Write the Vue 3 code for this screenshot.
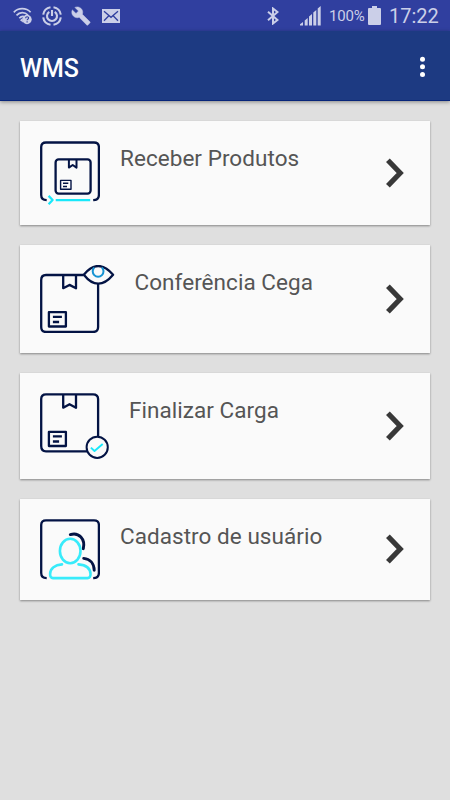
<script setup>
const items = [
  { icon: 'receive', label: 'Receber Produtos' },
  { icon: 'blind', label: 'Conferência Cega' },
  { icon: 'finish', label: 'Finalizar Carga' },
  { icon: 'users', label: 'Cadastro de usuário' },
]
</script>

<template>
  <div class="screen">
    <header class="status">
      <div class="notifications">
        <svg class="wifi" width="20" height="18" viewBox="0 0 20 18">
          <g fill="none" stroke="currentColor" stroke-width="1.7">
            <path d="M.8 5.3C5.3.5 13.200 .5 17.600 5.300M3.500 8.300C6.800 4.800 11.600 4.800 15 8M6.300 11.300C8 9.300 9.300 9 11 9.500" />
          </g>
          <path d="M7 13.200 9.500 11 10 15.600Z" fill="currentColor" />
          <circle cx="14" cy="12.500" r="4.700" fill="currentColor" />
          <path d="M12.600 11.300c0-2 3-1.900 3-.2 0 1.200-1.500 1.100-1.500 2.200M14.100 14.300v1.300" fill="none" stroke="#303f9f" stroke-width="1.100" />
        </svg>
        <svg class="power" width="20" height="20" viewBox="0 0 20 20" fill="none" stroke="currentColor" stroke-width="2.100">
          <path d="M8.500 1.200A8.900 8.900 0 0 0 1.200 8.600M1.200 11.400A8.900 8.900 0 0 0 8.500 18.800M11.500 18.800A8.900 8.900 0 0 0 18.800 11.400M18.800 8.600A8.900 8.900 0 0 0 11.500 1.200" />
          <path d="M7.300 5.800a5 5 0 1 0 5.400 0M10 4v6" />
        </svg>
        <svg class="wrench" width="20" height="20" viewBox="0 0 24 24" fill="currentColor" stroke="currentColor" stroke-width=".6">
          <path d="M22.700 19l-9.100-9.100c.9-2.300.4-5-1.500-6.900-2-2-5-2.400-7.400-1.300L9 6 6 9 1.600 4.700C.4 7.100.9 10.100 2.900 12.100c1.900 1.900 4.600 2.400 6.900 1.500l9.100 9.100c.4.400 1 .4 1.400 0l2.300-2.300c.5-.4.5-1.100.1-1.400z" />
        </svg>
        <svg class="mail" width="18" height="14" viewBox="0 0 18 14">
          <rect width="18" height="14" fill="currentColor" />
          <path d="M2 2.300 9 8.300 16 2.300M2 11.800 6.600 7M16 11.800 11.400 7" fill="none" stroke="#303f9f" stroke-width="1.300" />
        </svg>
      </div>
      <div class="system">
        <svg class="bluetooth" width="12" height="18" viewBox="0 0 12 18" fill="none" stroke="currentColor" stroke-width="2">
          <path d="M1 4.800 10.500 13 6 16.500V1.500L10.500 5 1 13.200" />
        </svg>
        <svg class="signal" width="21" height="20" viewBox="0 0 21 20" fill="currentColor">
          <path d="M0 19.500V18.300L3 16v3.500zM4.700 19.500V14.500L7.700 12v7.500zM9 19.500V10.500L12 8v11.500zM13.300 19.500V6.500L16.300 4v15.500zM17.700 19.500V2.500L20.700 0v19.500z" />
        </svg>
        <span class="percent">100%</span>
        <svg class="battery" width="13" height="19" viewBox="0 0 13 19" fill="currentColor">
          <path d="M4 0h5v2h3q1 0 1 1v15q0 1-1 1H1q-1 0-1-1V3q0-1 1-1h3z" />
        </svg>
        <time>17:22</time>
      </div>
    </header>

    <nav class="toolbar">
      <h1>WMS</h1>
      <svg class="more" width="6" height="22" viewBox="0 0 6 22" fill="#fff">
        <circle cx="2.500" cy="3.200" r="2.500" /><circle cx="2.500" cy="10.800" r="2.500" /><circle cx="2.500" cy="18.400" r="2.500" />
      </svg>
    </nav>

    <main class="menu">
      <section v-for="item in items" :key="item.icon" class="card">
        <svg v-if="item.icon === 'receive'" class="art" width="60" height="64" viewBox="0 0 60 64">
          <path d="M6.700 59.200Q1.200 59 1.200 54V6Q1.200 1.500 6 1.500H54Q58.900 1.500 58.900 6V54Q58.900 59 53.200 59.200" />
          <rect x="15.600" y="18.400" width="35" height="34.200" rx="3" />
          <path class="medium" d="M28.900 18.400V26.600L32.700 24 36.500 26.600V18.400" />
          <rect class="thin" x="20.600" y="39.400" width="10.400" height="8.900" />
          <path class="thin" d="M23 42.200h5.300M23 45.500h4" />
          <path class="cyan" d="M8.600 54.900 12.600 59 8.600 63.200M15.700 59.100H50.200" />
        </svg>
        <svg v-else-if="item.icon === 'blind'" class="art" width="74.500" height="68" viewBox="0 0 74.500 68">
          <path d="M43.500 10H6Q1.200 10 1.200 15V62Q1.200 67 6 67H53Q58.100 67 58.100 62V19" />
          <path d="M23.200 10V23.200L29.500 19.900 36 23.200V10" />
          <rect x="8.900" y="47.200" width="17" height="14.300" />
          <path d="M12.900 51.800h9M12.900 57h6.200" />
          <path d="M43.800 9.700Q58-7.700 73.100 9.700Q58 27.700 43.800 9.700Z" />
          <path class="blue" d="M54.300 2.500A5.400 5.400 0 1 0 61.900 2.500" />
        </svg>
        <svg v-else-if="item.icon === 'finish'" class="art" width="69" height="66" viewBox="0 0 69 66">
          <path d="M58.100 43.500V6Q58.100 1.300 53 1.300H6Q1.200 1.300 1.200 6V53Q1.200 58.300 6 58.300H47" />
          <path d="M23.200 1.300V14.700L29.500 11.200 36 14.700V1.300" />
          <rect x="8.900" y="38.900" width="17" height="14.100" />
          <path d="M12.900 43.400h9M12.900 48.500h6.200" />
          <circle class="medium" cx="57.200" cy="54.300" r="10.600" />
          <path class="cyan check" d="M50.900 54.600 54.500 58 62.700 51" />
        </svg>
        <svg v-else class="art" width="60" height="60.500" viewBox="0 0 60 60.500">
          <path d="M6.700 59.200Q1.200 59 1.200 54V6Q1.200 1.400 6 1.400H54Q58.900 1.400 58.900 6V54Q58.900 59 53.200 59.200" />
          <path class="bold" d="M30.300 15.600C39 13 45.500 20 43.300 29.700M43.700 39.400C50 40 54 44.500 54.200 51.300" />
          <g class="cyan user">
            <ellipse cx="30.200" cy="32" rx="10.300" ry="12.200" />
            <path d="M22 45.400C15 46 10.300 49.500 10.100 55Q10 59.100 13 59.100H47.500Q50.600 59.100 50.500 55C50.300 49.500 46 46 38.500 45.400" />
          </g>
        </svg>
        <span class="label">{{ item.label }}</span>
        <svg class="chevron" width="19" height="30" viewBox="0 0 19 30">
          <path d="M1.900 2.200 14.200 15 1.900 27.800" />
        </svg>
      </section>
    </main>
  </div>
</template>

<style>
body {
  background: #dfdfdf;
}
</style>

<style scoped>
.screen {
  height: 800px;
  display: flex;
  flex-direction: column;
  background: #dfdfdf;
  font-family: Roboto, sans-serif;
}
.status {
  height: 31px;
  flex: none;
  box-sizing: border-box;
  padding: 0 11px 0 13px;
  display: flex;
  justify-content: space-between;
  background: #303f9f;
  color: #cbcfe8;
}
.notifications,
.system {
  display: flex;
  align-items: center;
}
.power {
  margin-left: 9px;
}
.wrench {
  margin-left: 9px;
}
.mail {
  margin-left: 11px;
}
.signal {
  margin-left: 21px;
}
.percent {
  margin-left: 8px;
  width: 35px;
  font-size: 15px;
  letter-spacing: -0.2px;
}
.battery {
  margin-left: 4px;
}
time {
  margin-left: 8px;
  width: 50px;
  font-size: 20px;
  white-space: nowrap;
}
.toolbar {
  height: 70px;
  flex: none;
  box-sizing: border-box;
  padding: 0 24px 0 20px;
  display: flex;
  align-items: center;
  justify-content: space-between;
  background: #1d3a82;
  border-bottom: 1px solid #07257a;
  box-shadow: 0 1px 4px rgba(0, 0, 0, 0.4);
}
h1 {
  margin: 6px 0 0;
  color: #fff;
  font-size: 25px;
  font-weight: 500;
  line-height: 30px;
}
.more {
  margin-top: 2px;
}
.menu {
  padding: 20px;
  display: flex;
  flex-direction: column;
  gap: 20px;
}
.card {
  padding: 20px;
  display: flex;
  align-items: flex-start;
  gap: 20px;
  background: #fafafa;
  box-shadow: 0 1px 2px rgba(0, 0, 0, 0.4);
}
.art {
  flex: none;
  fill: none;
  stroke: #031344;
  stroke-width: 2.300;
  stroke-linejoin: round;
}
.medium {
  stroke-width: 2;
}
.thin {
  stroke-width: 1.400;
}
.bold {
  stroke-width: 2.900;
  stroke-linecap: round;
}
.cyan {
  stroke: #18e8fa;
}
.check {
  stroke-width: 1.900;
}
.user {
  stroke: #38ebfa;
  stroke-width: 2.600;
  stroke-linecap: round;
}
.blue {
  stroke: #1793d2;
  stroke-width: 2;
}
.label {
  flex: 1;
  margin-top: 4px;
  color: #555;
  font-size: 22.500px;
  letter-spacing: 0.05px;
  line-height: 27px;
  white-space: nowrap;
}
.chevron {
  align-self: center;
  margin-right: 5px;
  fill: none;
  stroke: #383838;
  stroke-width: 5.200;
}
</style>
